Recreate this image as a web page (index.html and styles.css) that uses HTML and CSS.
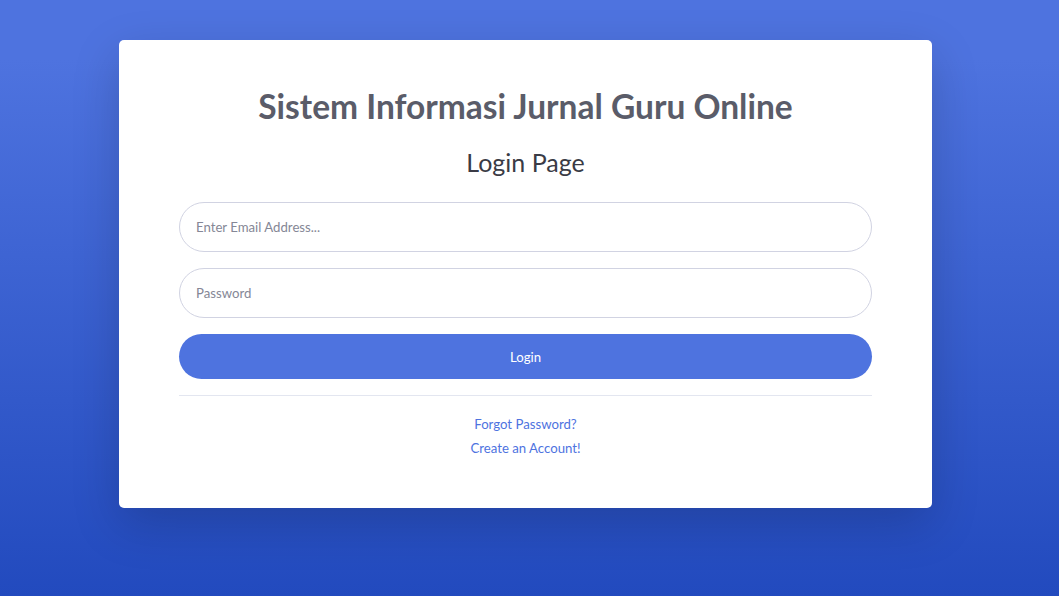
FILE: index.html
```html
<!DOCTYPE html>
<html lang="id">
<head>
<meta charset="utf-8">
<title>Login Page</title>
<link rel="stylesheet" href="styles.css">
</head>
<body>
<div class="page">
  <div class="card">
    <h1 class="title">Sistem Informasi Jurnal Guru Online</h1>
    <h2 class="subtitle">Login Page</h2>
    <form class="form">
      <input class="field" type="email" placeholder="Enter Email Address...">
      <input class="field" type="password" placeholder="Password">
      <button class="btn" type="button">Login</button>
    </form>
    <hr class="divider">
    <div class="links">
      <a class="link" href="#">Forgot Password?</a>
      <a class="link" href="#">Create an Account!</a>
    </div>
  </div>
</div>
</body>
</html>
```

FILE: styles.css
```css
html, body {
  margin: 0;
  padding: 0;
  height: 100%;
}
body {
  font-family: Lato, "Noto Sans", sans-serif;
  background-color: #4e73df;
  background-image: linear-gradient(180deg, #4e73df 10%, #224abe 100%);
  min-height: 596px;
}
.page {
  padding: 40px 0 0 119px;
}
.card {
  box-sizing: border-box;
  width: 813px;
  height: 468px;
  background: #fff;
  border-radius: 5px;
  box-shadow: 0 16px 48px rgba(0, 0, 0, 0.175);
  padding: 47px 60px;
  display: flex;
  flex-direction: column;
}
.title {
  margin: 0;
  text-align: center;
  font-size: 33.5px;
  font-weight: 700;
  color: #5a5c69;
  line-height: 38px;
}
.subtitle {
  margin: 21px 0 0;
  text-align: center;
  font-size: 25px;
  font-weight: 400;
  color: #3a3b45;
  line-height: 32px;
}
.form {
  margin-top: 24px;
  display: flex;
  flex-direction: column;
  gap: 16px;
}
.field {
  box-sizing: border-box;
  height: 50px;
  width: 100%;
  border: 1px solid #d1d3e2;
  border-radius: 25px;
  padding: 0 16px;
  font-family: inherit;
  font-size: 13.2px;
  color: #6e707e;
  background: #fff;
  outline: none;
}
.field::placeholder {
  color: #858796;
}
.btn {
  height: 45px;
  border: none;
  border-radius: 23px;
  background: #4e73df;
  color: #fff;
  font-family: inherit;
  font-size: 13.2px;
}
.divider {
  margin: 16px 0 0;
  border: 0;
  border-top: 1px solid #e3e6f0;
}
.links {
  margin-top: 19px;
  display: flex;
  flex-direction: column;
  align-items: center;
  gap: 5px;
}
.link {
  font-size: 13.2px;
  line-height: 19px;
  color: #4e73df;
  text-decoration: none;
}
```
